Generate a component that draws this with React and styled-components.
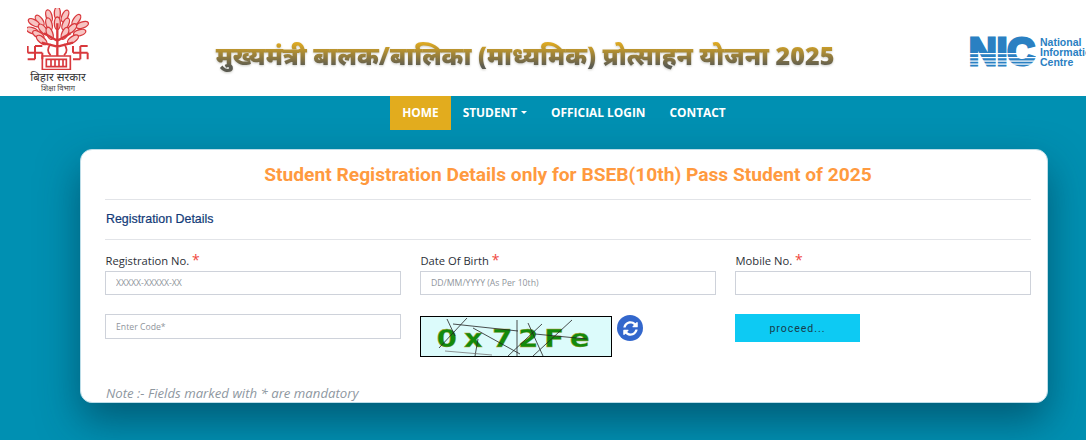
import styled, { createGlobalStyle } from 'styled-components';
import { FaSyncAlt } from 'react-icons/fa';

const GlobalStyle = createGlobalStyle`
  html, body {
    margin: 0;
    padding: 0;
    height: 440px;
    overflow: hidden;
    background: #0090b2;
    font-family: "Open Sans", "Noto Sans", sans-serif;
  }
  * { box-sizing: border-box; }
`;

const Page = styled.div`
  width: 1086px;
  height: 440px;
  overflow: hidden;
`;

const Header = styled.header`
  height: 96px;
  background: #fff;
  display: flex;
  align-items: flex-start;
  overflow: hidden;
`;

const LogoBlock = styled.div`
  width: 116px;
  padding-top: 8px;
  display: flex;
  flex-direction: column;
  align-items: center;
  flex-shrink: 0;
`;

const StateName = styled.div`
  font-size: 11.5px;
  line-height: 12px;
  margin-top: 1px;
  color: #333;
  font-family: "Noto Sans", "Open Sans", sans-serif;
`;

const DeptName = styled.div`
  font-size: 7.5px;
  line-height: 10px;
  color: #444;
  font-family: "Noto Sans", "Open Sans", sans-serif;
`;

const Title = styled.h1`
  flex: 1;
  margin: 37px 0 0;
  padding-right: 34px;
  text-align: center;
  font-family: "Noto Sans", "Open Sans", sans-serif;
  font-size: 25.1px;
  line-height: 36px;
  font-weight: 900;
  white-space: nowrap;
  background: linear-gradient(180deg, #dca822 18%, #5b5b52 82%);
  -webkit-background-clip: text;
  background-clip: text;
  color: transparent;
  filter: drop-shadow(0 1px 1px rgba(90, 90, 70, 0.3));
`;

const NicBlock = styled.div`
  width: 118px;
  flex-shrink: 0;
  padding-top: 36px;
  display: flex;
  gap: 4px;
`;

const NicSvg = styled.svg`
  flex-shrink: 0;
`;

const NicText = styled.div`
  font-family: "Liberation Sans", Arial, sans-serif;
  font-weight: 700;
  font-size: 10.5px;
  line-height: 10px;
  color: #2a80c2;
  white-space: nowrap;
  margin-top: 1px;
`;

const Nav = styled.nav`
  height: 34px;
  background: #0090b2;
  display: flex;
  justify-content: center;
  padding-left: 42px;
`;

const NavItem = styled.a`
  display: flex;
  align-items: center;
  gap: 4px;
  padding: 0 12px 2px;
  font-size: 11.9px;
  font-weight: 700;
  color: #fff;
  background: ${(p) => (p.$active ? '#e2ac1e' : 'transparent')};
`;

const Caret = styled.span`
  width: 0;
  height: 0;
  border-left: 3px solid transparent;
  border-right: 3px solid transparent;
  border-top: 3px solid #fff;
`;

const Content = styled.main`
  padding: 19px 38px 0 80px;
`;

const Card = styled.section`
  height: 254px;
  padding: 0 16px 0 24px;
  background: #fff;
  border-radius: 12px;
  border: 1px solid #bcdde8;
  box-shadow: 0 18px 40px rgba(0, 40, 60, 0.5);
  overflow: hidden;
`;

const CardTitle = styled.h2`
  margin: 0;
  height: 50px;
  border-bottom: 1px solid #e2e4e8;
  display: flex;
  align-items: center;
  justify-content: center;
  font-family: Roboto, sans-serif;
  font-size: 19.2px;
  font-weight: 700;
  color: #ff9a3f;
`;

const SectionTitle = styled.h3`
  margin: 0;
  height: 40px;
  padding: 0 0 1px 1px;
  border-bottom: 1px solid #e2e4e8;
  display: flex;
  align-items: center;
  font-family: "Liberation Sans", Arial, sans-serif;
  font-size: 12.4px;
  font-weight: 400;
  color: #123a78;
  -webkit-text-stroke: 0.2px #123a78;
`;

const FormGrid = styled.div`
  display: grid;
  grid-template-columns: repeat(3, 296px);
  grid-template-rows: 63px 70px;
  column-gap: 19px;
  padding-top: 11px;
  height: 144px;
`;

const Field = styled.div`
  display: flex;
  flex-direction: column;
  align-items: flex-start;
`;

const Label = styled.label`
  padding-left: 0.5px;
  font-size: 11.2px;
  line-height: 20px;
  font-weight: 500;
  color: #2c3038;
`;

const Star = styled.span`
  color: #f0483e;
  font-size: 14px;
  line-height: 14px;
`;

const Input = styled.input`
  width: 296px;
  height: ${(p) => p.$h || 24}px;
  border: 1px solid #ced2da;
  background: #fff;
  padding: 0 10px;
  font-family: "Open Sans", sans-serif;
  font-size: 8.7px;
  outline: none;

  &::placeholder {
    color: #8f959c;
    opacity: 1;
  }
`;

const CaptchaRow = styled.div`
  display: flex;
  align-items: flex-start;
  gap: 5px;
  padding-top: 2px;
`;

const CaptchaBox = styled.svg`
  display: block;
  width: 192px;
  height: 41px;
`;

const RefreshButton = styled.div`
  width: 26px;
  height: 26px;
  margin-top: -1px;
  border-radius: 50%;
  background: #3367cc;
  color: #fff;
  display: flex;
  align-items: center;
  justify-content: center;
  font-size: 15px;
`;

const Proceed = styled.button`
  width: 125px;
  height: 28px;
  border: 0;
  background: #0dcaf3;
  color: #173b4a;
  font-family: Roboto, sans-serif;
  font-size: 10.5px;
  letter-spacing: 1px;
`;

const Note = styled.p`
  margin: 0;
  padding-left: 1px;
  font-size: 13.2px;
  font-style: italic;
  line-height: 18px;
  color: #8e979f;
`;

const leaves = [
  [175, 40, 0], [150, 48, -15], [198, 48, 25], [122, 62, -35], [232, 60, 35], [105, 68, -60],
  [250, 75, 70], [100, 92, -70], [242, 98, 75], [118, 104, -60], [150, 72, -15], [200, 72, 25],
  [132, 88, -40], [218, 86, 45], [152, 100, -20], [198, 100, 25], [128, 120, -50], [222, 118, 55],
  [175, 70, 0],
];

// the state emblem: a tree in a pot between two square marks, drawn in the crop's coordinates
const Emblem = () => (
  <svg width="62" height="62" viewBox="84 24 186 186">
    <g fill="#f7c4c2" stroke="#d8383c" strokeWidth="4">
      {leaves.map(([x, y, r]) => (
        <ellipse key={`${x}-${y}`} cx={x} cy={y} rx="9" ry="19" transform={`rotate(${r} ${x} ${y})`} />
      ))}
    </g>
    <g fill="none" stroke="#d8383c" strokeWidth="5">
      <path d="M175 168 V70 M175 122 L135 100 M175 122 L215 100 M175 140 L128 128 M175 140 L222 128" strokeWidth="7" />
      <path d="M155 132 q-16 20 0 34 M195 132 q16 20 0 34" />
      <path d="M108 138 V178 M86 158 H130 M108 138 H130 M130 158 V178 M108 178 H86 M86 158 V138" strokeWidth="6" />
      <path d="M244 138 V178 M222 158 H266 M244 138 H266 M266 158 V178 M244 178 H222 M222 158 V138" strokeWidth="6" />
      <path d="M130 168 H214 V209 H130 Z M142 178 H202 V200 H142 Z" />
      <path d="M156 180 V198 M168 180 V198 M180 180 V198 M192 180 V198" />
    </g>
  </svg>
);

const NicMark = () => (
  <NicSvg width="68" height="32" viewBox="0 0 68 32">
    <text x="1" y="29" textLength="66" lengthAdjust="spacingAndGlyphs" fontFamily="Liberation Sans, Arial, sans-serif" fontWeight="700" fontSize="38" fill="#2a80c2" stroke="#2a80c2" strokeWidth="3">NIC</text>
    <g fill="#fff">
      <rect x="0" y="17" width="68" height="1.2" />
      <rect x="0" y="21" width="68" height="1.2" />
      <rect x="0" y="24.5" width="68" height="1.2" />
      <rect x="0" y="27.5" width="68" height="1.2" />
    </g>
  </NicSvg>
);

const Captcha = () => (
  <CaptchaBox viewBox="0 0 192 41">
    <rect x="0.5" y="0.5" width="191" height="40" fill="#dcfbfb" stroke="#000" />
    <text transform="scale(1.18 1)" x="14 37 61 83 105 127" y="31" fontFamily="DejaVu Sans, sans-serif" fontWeight="700" fontSize="25" fill="#128a0c" stroke="#b9a23a" strokeWidth="0.3">0x72Fe</text>
    <g fill="none" stroke="#222" strokeWidth="0.8">
      <path d="M27 3 L35 20 M47 2 L19 32 M33 8 L98 15 M53 12 L100 38 M97 4 V40 M108 7 L123 40 M122 8 L88 40 M115 18 L167 23 M152 4 L113 40 M58 23 L55 40" />
      <path d="M25 35 L72 39" stroke="#777" />
    </g>
  </CaptchaBox>
);

const App = () => {
  return (
    <Page>
      <GlobalStyle />
      <Header>
        <LogoBlock>
          <Emblem />
          <StateName>बिहार सरकार</StateName>
          <DeptName>शिक्षा विभाग</DeptName>
        </LogoBlock>
        <Title>मुख्यमंत्री बालक/बालिका (माध्यमिक) प्रोत्साहन योजना 2025</Title>
        <NicBlock>
          <NicMark />
          <NicText>
            National
            <br />
            Information
            <br />
            Centre
          </NicText>
        </NicBlock>
      </Header>
      <Nav>
        <NavItem $active>HOME</NavItem>
        <NavItem>
          STUDENT
          <Caret />
        </NavItem>
        <NavItem>OFFICIAL LOGIN</NavItem>
        <NavItem>CONTACT</NavItem>
      </Nav>
      <Content>
        <Card>
          <CardTitle>Student Registration Details only for BSEB(10th) Pass Student of 2025</CardTitle>
          <SectionTitle>Registration Details</SectionTitle>
          <FormGrid>
            <Field>
              <Label>
                Registration No. <Star>*</Star>
              </Label>
              <Input placeholder="XXXXX-XXXXX-XX" />
            </Field>
            <Field>
              <Label>
                Date Of Birth <Star>*</Star>
              </Label>
              <Input placeholder="DD/MM/YYYY (As Per 10th)" />
            </Field>
            <Field>
              <Label>
                Mobile No. <Star>*</Star>
              </Label>
              <Input />
            </Field>
            <Field>
              <Input $h={25} placeholder="Enter Code*" />
            </Field>
            <CaptchaRow>
              <Captcha />
              <RefreshButton>
                <FaSyncAlt />
              </RefreshButton>
            </CaptchaRow>
            <Field>
              <Proceed>proceed...</Proceed>
            </Field>
          </FormGrid>
          <Note>Note :- Fields marked with * are mandatory</Note>
        </Card>
      </Content>
    </Page>
  );
};

export default App;
